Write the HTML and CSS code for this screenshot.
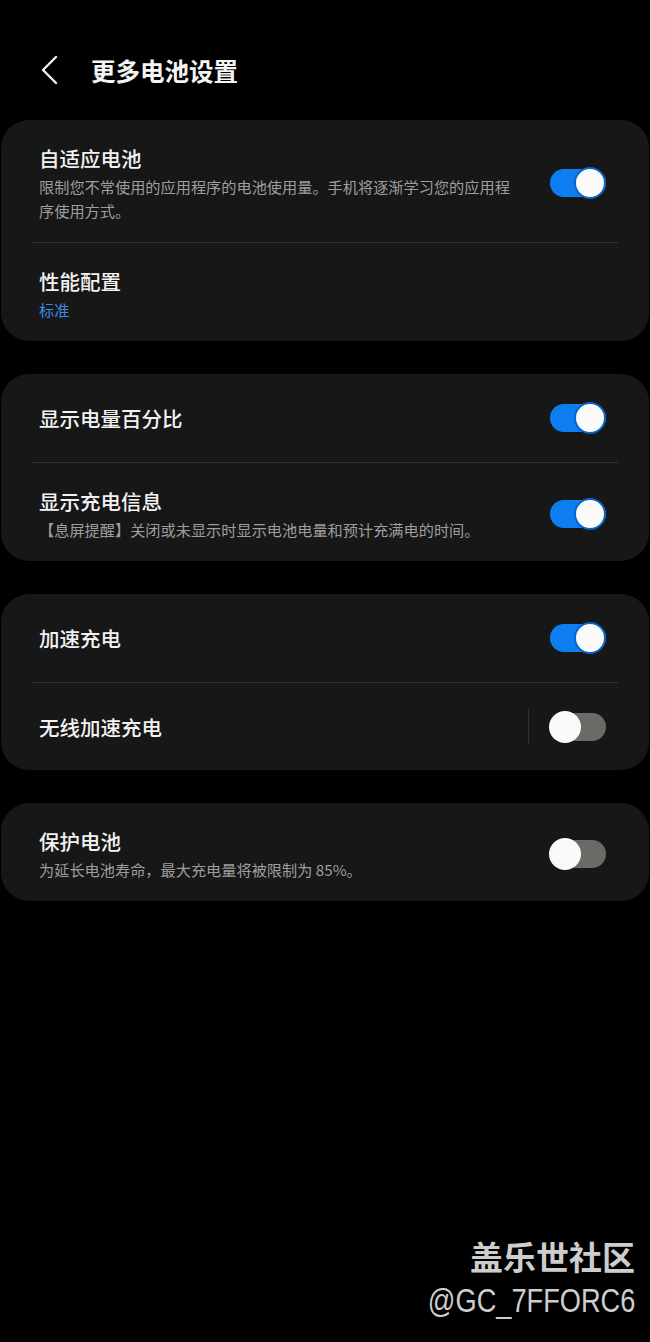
FILE: index.html
```html
<!DOCTYPE html>
<html lang="zh-CN">
<head>
  <meta charset="UTF-8" />
  <meta name="viewport" content="width=device-width, initial-scale=1.0" />
  <title>更多电池设置</title>
  <link rel="stylesheet" href="styles.css">
</head>
<body>
  <div class="page">
    <header class="topbar">
      <svg class="back" width="20" height="30" viewBox="0 0 20 30">
        <path d="M16 2 L3 15 L16 28" fill="none" stroke="#f2f2f2" stroke-width="2.4" stroke-linecap="round" stroke-linejoin="round"/>
      </svg>
      <h1>更多电池设置</h1>
    </header>

    <div class="card">
      <div class="row two">
        <div class="text">
          <div class="title">自适应电池</div>
          <div class="sub">限制您不常使用的应用程序的电池使用量。手机将逐渐学习您的应用程序使用方式。</div>
        </div>
        <span class="switch on"></span>
      </div>
      <div class="row two">
        <div class="text">
          <div class="title">性能配置</div>
          <div class="sub blue">标准</div>
        </div>
      </div>
    </div>

    <div class="card">
      <div class="row">
        <div class="text">
          <div class="title">显示电量百分比</div>
        </div>
        <span class="switch on"></span>
      </div>
      <div class="row two">
        <div class="text">
          <div class="title">显示充电信息</div>
          <div class="sub">【息屏提醒】关闭或未显示时显示电池电量和预计充满电的时间。</div>
        </div>
        <span class="switch on"></span>
      </div>
    </div>

    <div class="card">
      <div class="row">
        <div class="text">
          <div class="title">加速充电</div>
        </div>
        <span class="switch on"></span>
      </div>
      <div class="row">
        <div class="text">
          <div class="title">无线加速充电</div>
        </div>
        <span class="vline"></span>
        <span class="switch"></span>
      </div>
    </div>

    <div class="card">
      <div class="row two">
        <div class="text">
          <div class="title">保护电池</div>
          <div class="sub">为延长电池寿命，最大充电量将被限制为 85%。</div>
        </div>
        <span class="switch"></span>
      </div>
    </div>

    <div class="watermark">
      <div class="wm-name">盖乐世社区</div>
      <div class="wm-id">@GC_7FFORC6</div>
    </div>
  </div>
</body>
</html>
```

FILE: styles.css
```css
body {
  margin: 0;
  background-color: #000;
  font-family: "Noto Sans CJK SC", "Noto Sans", sans-serif;
  color: #f2f2f2;
}

.page {
  position: relative;
  height: 1342px;
  padding: 0 1px;
  display: flex;
  flex-direction: column;
  gap: 33px;
}

/* barra superior */
.topbar {
  display: flex;
  align-items: center;
  height: 120px;
  padding: 20px 0 0 39px;
  margin-bottom: -33px;
  box-sizing: border-box;
}

.back {
  margin-right: 31px;
}

h1 {
  margin: 0;
  font-size: 24.5px;
  font-weight: 700;
  color: #f4f4f4;
}

/* tarjetas */
.card {
  background-color: #171717;
  border-radius: 28px;
  padding: 0 31px;
}

.row {
  display: flex;
  align-items: center;
  min-height: 88px;
  padding: 0 11px 0 7px;
  box-sizing: border-box;
}

.row + .row {
  border-top: 1px solid #313131;
}

.row.two {
  padding-top: 24px;
  padding-bottom: 20px;
}

.text {
  flex: 1;
}

.title {
  font-size: 20.5px;
  line-height: 28px;
  font-weight: 500;
  color: #f2f2f2;
}

.sub {
  margin-top: 2px;
  width: 478px;
  font-size: 15.2px;
  line-height: 24px;
  color: #9e9e9e;
}

.sub.blue {
  color: #3a8ae0;
}

.vline {
  width: 1px;
  height: 35px;
  background-color: #333;
  margin-right: 20px;
}

/* interruptores */
.switch {
  position: relative;
  width: 58px;
  height: 32px;
  flex-shrink: 0;
}

.switch::before {
  content: "";
  position: absolute;
  left: 1px;
  top: 2px;
  width: 56px;
  height: 28px;
  border-radius: 14px;
  background-color: #6a6a66;
}

.switch::after {
  content: "";
  position: absolute;
  left: 0;
  top: 0;
  width: 32px;
  height: 32px;
  border-radius: 50%;
  background-color: #fafafa;
  box-sizing: border-box;
}

.switch.on::before {
  background-color: #0d7ef2;
}

.switch.on::after {
  left: 25px;
  border: 2px solid #0b63c4;
}

/* marca de agua */
.watermark {
  position: absolute;
  right: 15px;
  bottom: 20px;
  text-align: right;
  color: #cdcdcd;
}

.wm-name {
  font-size: 33px;
  font-weight: 700;
  line-height: 44px;
}

.wm-id {
  font-family: "Liberation Sans", Arial, sans-serif;
  font-size: 34px;
  line-height: 44px;
  transform: scaleX(0.8);
  transform-origin: right center;
}
```
